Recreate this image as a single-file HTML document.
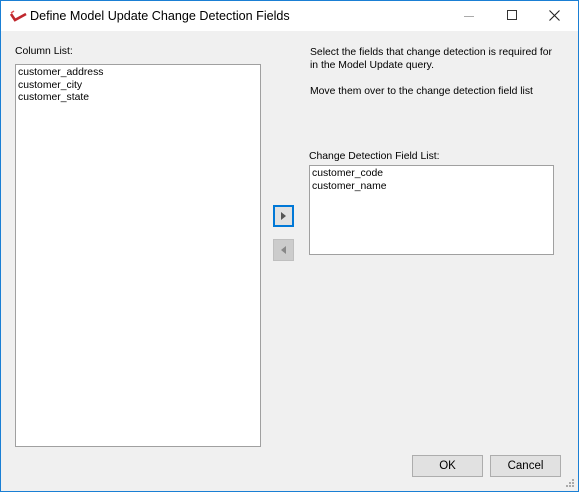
<!DOCTYPE html>
<html><head><style>
*{margin:0;padding:0;box-sizing:border-box}
body{width:579px;height:492px;overflow:hidden;font-family:"Liberation Sans",Arial,sans-serif;font-size:10.4px;color:#000}
.win{position:absolute;left:0;top:0;width:579px;height:492px;border:1px solid #1a7fd4;background:#f0f0f0}
.title{position:absolute;left:0;top:0;width:577px;height:30px;background:#fff}
.title .t{position:absolute;left:29px;top:8px;font-size:12.6px;color:#000}
.abs{position:absolute}
.box{position:absolute;background:#fff;border:1px solid #a0a0a0;padding:2px 2px;line-height:12.5px}
.btn{position:absolute;background:#e1e1e1;border:1px solid #adadad;text-align:center;font-size:11.5px}
</style></head><body>
<div class="win">
 <div class="title">
  <svg class="abs" style="left:9px;top:9px" width="17" height="12" viewBox="0 0 17 12"><path d="M1 4 L5 10 L16 4" fill="none" stroke="#c0272d" stroke-width="2.6"/><path d="M1 3 L4 1" stroke="#e05050" stroke-width="1.5"/></svg>
  <div class="t">Define Model Update Change Detection Fields</div>
  <div class="abs" style="left:463px;top:15px;width:10px;height:1px;background:#aaa"></div>
  <div class="abs" style="left:506px;top:9px;width:10px;height:10px;border:1px solid #333"></div>
  <svg class="abs" style="left:548px;top:9px" width="11" height="11"><path d="M0.5 0.5L10.5 10.5M10.5 0.5L0.5 10.5" stroke="#222" stroke-width="1.1"/></svg>
 </div>
 <div class="abs" style="left:14px;top:45px">Column List:</div>
 <div class="box" style="left:14px;top:63px;width:246px;height:383px">customer_address<br>customer_city<br>customer_state</div>
 <div class="abs" style="left:309px;top:45px;line-height:13px">Select the fields that change detection is required for<br>in the Model Update query.<br><br>Move them over to the change detection field list</div>
 <div class="abs" style="left:308px;top:150px">Change Detection Field List:</div>
 <div class="box" style="left:308px;top:164px;width:245px;height:90px">customer_code<br>customer_name</div>
 <div class="btn" style="left:272px;top:204px;width:21px;height:22px;border:2px solid #0078d7"><svg style="position:absolute;left:5px;top:5px" width="8" height="8"><path d="M1 0L6 4L1 8Z" fill="#555"/></svg></div>
 <div class="btn" style="left:272px;top:238px;width:21px;height:22px;background:#ccc;border-color:#bfbfbf"><svg style="position:absolute;left:6px;top:6px" width="8" height="8"><path d="M6 0L1 4L6 8Z" fill="#888"/></svg></div>
 <div class="btn" style="left:411px;top:454px;width:71px;height:22px;line-height:20px">OK</div>
 <div class="btn" style="left:489px;top:454px;width:71px;height:22px;line-height:20px">Cancel</div>
 <svg class="abs" style="left:565px;top:478px" width="10" height="10"><g fill="#aaa"><rect x="6" y="0" width="2" height="2"/><rect x="3" y="3" width="2" height="2"/><rect x="6" y="3" width="2" height="2"/><rect x="0" y="6" width="2" height="2"/><rect x="3" y="6" width="2" height="2"/><rect x="6" y="6" width="2" height="2"/></g></svg>
</div>
</body></html>
